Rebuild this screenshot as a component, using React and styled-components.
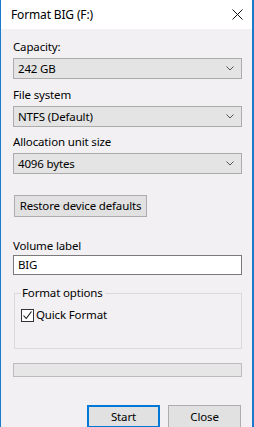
import React from 'react';
import styled, { createGlobalStyle } from 'styled-components';

const GlobalStyle = createGlobalStyle`
  html, body {
    margin: 0;
    padding: 0;
    background: #f3f0f3;
  }
  body {
    font-family: "Noto Sans", "Open Sans", Arial, sans-serif;
    font-size: 11.5px;
    letter-spacing: -0.15px;
    color: #000;
  }
`;

const Window = styled.div`
  width: 254px;
  height: 427px;
  box-sizing: border-box;
  border-left: 1px solid #1979ca;
  border-right: 2px solid #1979ca;
  background: #f3f0f3;
  overflow: hidden;
  display: flex;
  flex-direction: column;
`;

const TitleBar = styled.div`
  height: 29px;
  flex: none;
  background: #fff;
  display: flex;
  align-items: center;
  justify-content: space-between;
  padding: 0 9px 0 10px;
  font-size: 12px;
  line-height: 16px;
`;

const CloseGlyph = styled.svg`
  width: 11px;
  height: 11px;
`;

const Body = styled.div`
  padding: 10px 10px 0 12px;
  display: flex;
  flex-direction: column;
`;

const Label = styled.div`
  line-height: 16px;
  margin-top: ${(p) => p.$gap ?? 7}px;
`;

const Select = styled.div`
  height: 21px;
  box-sizing: border-box;
  margin-top: 3px;
  border: 1px solid #acacac;
  background: #e4e4e4;
  display: flex;
  align-items: center;
  justify-content: space-between;
  padding: 0 7px 0 4px;
  line-height: 16px;
`;

const Chevron = styled.svg`
  width: 8px;
  height: 5px;
`;

const Button = styled.div`
  box-sizing: border-box;
  height: ${(p) => p.$h ?? 23}px;
  width: ${(p) => p.$w}px;
  border: ${(p) => (p.$primary ? '2px solid #0078d7' : '1px solid #adadad')};
  background: #e1e1e1;
  display: flex;
  align-items: center;
  justify-content: center;
  line-height: 16px;
`;

const RestoreRow = styled.div`
  margin-top: 21px;
  padding-left: 1px;
  display: flex;
`;

const TextInput = styled.div`
  height: 20px;
  box-sizing: border-box;
  margin-top: 1px;
  border: 1px solid #7a7a7a;
  background: #fff;
  display: flex;
  align-items: center;
  padding: 0 4px;
  line-height: 16px;
`;

const Group = styled.fieldset`
  margin: 10px 0 0 1px;
  padding: 6px 0 0 6px;
  height: 64px;
  box-sizing: border-box;
  border: 1px solid #dcd9dc;
  min-width: 0;
`;

const Legend = styled.legend`
  padding: 0 2px 0 1px;
  line-height: 16px;
`;

const CheckRow = styled.div`
  display: flex;
  align-items: center;
  gap: 2px;
  line-height: 16px;
`;

const Box = styled.div`
  width: 13px;
  height: 13px;
  box-sizing: border-box;
  border: 1px solid #333;
  background: #fff;
  display: flex;
  align-items: center;
  justify-content: center;
`;

const Progress = styled.div`
  margin-top: 14px;
  height: 14px;
  flex: none;
  box-sizing: border-box;
  border: 1px solid #bcbcbc;
  background: #e6e6e6;
`;

const Footer = styled.div`
  margin-top: 28px;
  display: flex;
  justify-content: flex-end;
  gap: 8px;
  padding-right: 1px;
`;

const Dropdown = ({ value }) => (
  <Select>
    <span>{value}</span>
    <Chevron viewBox="0 0 8 5">
      <path d="M0.5 0.5 L4 4 L7.5 0.5" fill="none" stroke="#555" strokeWidth="1" />
    </Chevron>
  </Select>
);

export default function App() {
  return (
    <>
      <GlobalStyle />
      <Window>
        <TitleBar>
          <span>Format BIG (F:)</span>
          <CloseGlyph viewBox="0 0 11 11">
            <path d="M0.5 0.5 L10.5 10.5 M10.5 0.5 L0.5 10.5" stroke="#111" strokeWidth="1" />
          </CloseGlyph>
        </TitleBar>
        <Body>
          <Label $gap={0}>Capacity:</Label>
          <Dropdown value="242 GB" />
          <Label $gap={8}>File system</Label>
          <Dropdown value="NTFS (Default)" />
          <Label>Allocation unit size</Label>
          <Dropdown value="4096 bytes" />
          <RestoreRow>
            <Button $w={133} $h={22}>Restore device defaults</Button>
          </RestoreRow>
          <Label $gap={21}>Volume label</Label>
          <TextInput>BIG</TextInput>
          <Group>
            <Legend>Format options</Legend>
            <CheckRow>
              <Box>
                <svg width="11" height="11" viewBox="0 0 11 11">
                  <path d="M1.5 5.5 L4.2 8.5 L9.5 1.5" fill="none" stroke="#111" strokeWidth="1.1" />
                </svg>
              </Box>
              <span>Quick Format</span>
            </CheckRow>
          </Group>
          <Progress />
          <Footer>
            <Button $w={73} $primary>Start</Button>
            <Button $w={73}>Close</Button>
          </Footer>
        </Body>
      </Window>
    </>
  );
}
